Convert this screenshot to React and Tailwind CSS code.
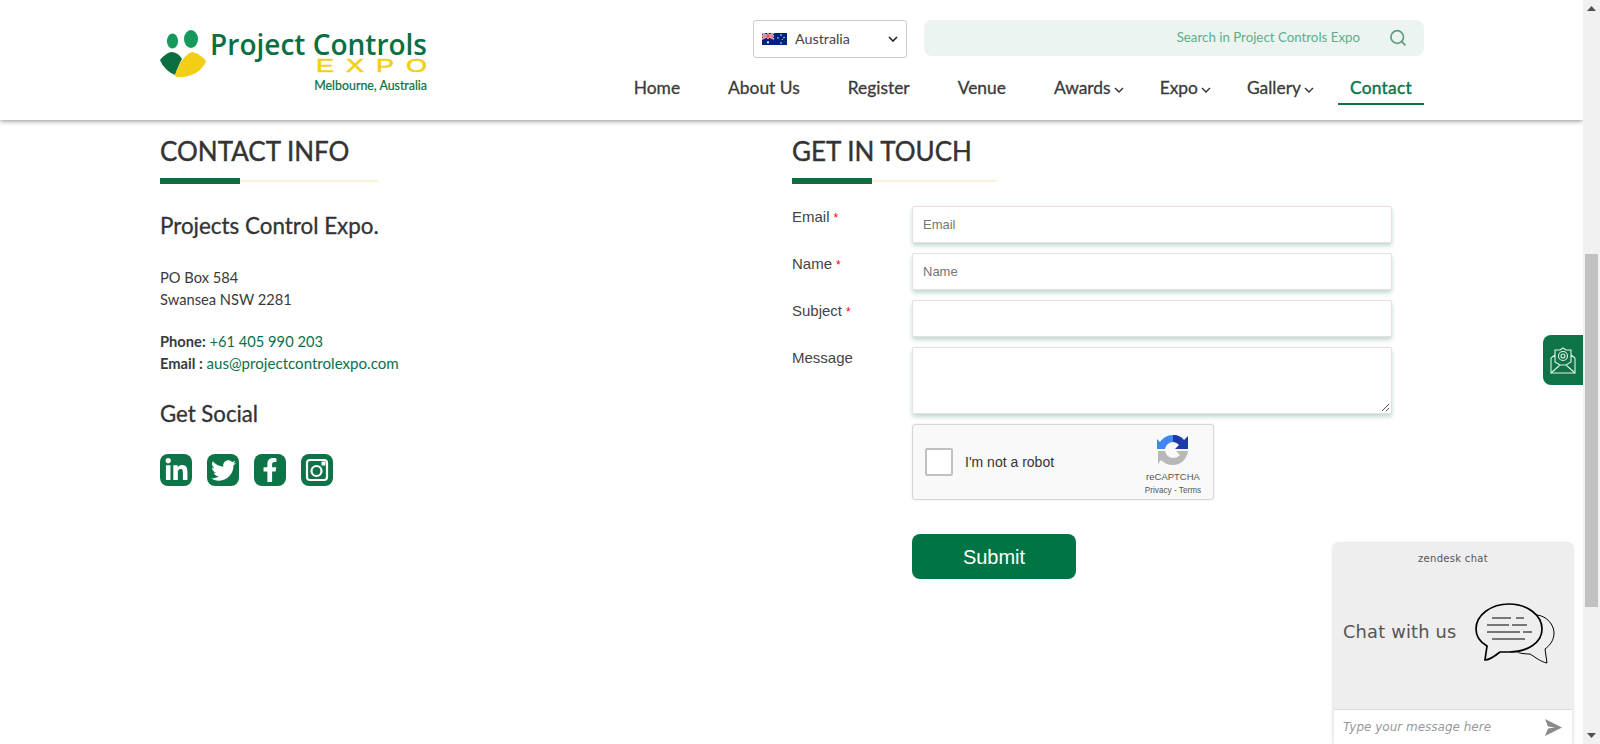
import React from 'react';
import { FaLinkedinIn, FaTwitter, FaFacebookF } from 'react-icons/fa';

const lato = { fontFamily: 'Lato, "Open Sans", sans-serif' };

function Logo() {
  return (
    <div className="flex items-start w-[270px] h-[65px] mt-[29px]">
      <svg width="47" height="48" viewBox="0 0 47 48" className="shrink-0 mt-px">
        <ellipse cx="12.5" cy="11" rx="5.6" ry="7.6" fill="#159a5b" />
        <ellipse cx="31" cy="9" rx="7" ry="9" fill="#159a5b" />
        <path d="M11 22 C16 22 20 25 22 29 C19 34 17 40 15 45 C8 42 3 37 0 30 C3 26 7 23 11 22Z" fill="#0c6f3f" />
        <path d="M32 22 C38 23 43 27 46 31 C43 40 33 47 20 47 C18 47 16 47 15 46 C17 38 23 25 32 22Z" fill="#f2cf16" />
      </svg>
      <div className="flex flex-col items-end w-[216px] ml-[4px]">
        <div className="text-[28px] leading-[30px] text-[#0c6f41] whitespace-nowrap" style={{ fontFamily: '"Open Sans", sans-serif', fontWeight: 600 }}>Project Controls</div>
        <div className="text-[18px] leading-[15px] font-normal text-[#f2cf16] tracking-[8px] -mr-[12px] whitespace-nowrap scale-x-[1.5] origin-right [-webkit-text-stroke:0.5px]" style={{ fontFamily: '"Liberation Sans", sans-serif' }}>EXPO</div>
        <div className="text-[12.4px] leading-[16px] text-[#0c6f41] whitespace-nowrap mt-[4px] [-webkit-text-stroke:0.2px]" style={lato}>Melbourne, Australia</div>
      </div>
    </div>
  );
}

function Chevron() {
  return (
    <svg width="10" height="6" viewBox="0 0 10 6" fill="none" stroke="#333" strokeWidth="1.4" className="ml-[3px] mt-[3px]">
      <path d="M1 1l4 4 4-4" />
    </svg>
  );
}

function Flag() {
  return (
    <svg width="25" height="12" viewBox="0 0 25 12" className="shrink-0">
      <rect width="25" height="12" fill="#00247d" />
      <path d="M0 0l12 6M12 0L0 6" stroke="#fff" strokeWidth="1.6" />
      <path d="M0 0l12 6M12 0L0 6" stroke="#cf142b" strokeWidth="0.6" />
      <path d="M6 0v6M0 3h12" stroke="#fff" strokeWidth="2" />
      <path d="M6 0v6M0 3h12" stroke="#cf142b" strokeWidth="1.1" />
      <circle cx="6" cy="9.3" r="1.1" fill="#fff" />
      <circle cx="19" cy="2" r="0.8" fill="#fff" />
      <circle cx="19" cy="10" r="0.8" fill="#fff" />
      <circle cx="16" cy="5" r="0.7" fill="#fff" />
      <circle cx="22" cy="4.5" r="0.7" fill="#fff" />
      <circle cx="20.3" cy="6.4" r="0.5" fill="#fff" />
    </svg>
  );
}

function NavItem({ label, chevron, active }) {
  return (
    <div className={`flex items-center h-[35px] pl-3 pt-[3px] text-[17.4px] whitespace-nowrap ${chevron ? 'pr-0' : 'pr-3'} ${active ? 'text-[#0c7346] border-b-2 border-[#0c7346] tracking-[0.25px] [-webkit-text-stroke:0.4px]' : 'text-[#3b3b3b] border-b-2 border-transparent [-webkit-text-stroke:0.3px]'}`}>
      {label}
      {chevron && <Chevron />}
    </div>
  );
}

function Header() {
  return (
    <header className="h-[120px] shrink-0 bg-white shadow-[0_1px_5px_rgba(0,0,0,0.45)] relative z-10 px-[160px] pr-[159px] flex justify-between" style={lato}>
      <Logo />
      <div className="flex flex-col items-end pt-[20px]">
        <div className="flex gap-[17px] w-[671px]">
          <div className="flex items-center w-[154px] h-[38px] border border-[#ccc] rounded-[3px] pl-[8px] pr-[8px] -mb-[2px]">
            <Flag />
            <span className="text-[14.3px] text-[#444] ml-[8px] flex-1">Australia</span>
            <svg width="10" height="6" viewBox="0 0 10 6" fill="none" stroke="#222" strokeWidth="1.6"><path d="M1 1l4 4 4-4" /></svg>
          </div>
          <div className="flex items-center justify-end h-[36px] w-[500px] bg-[#ebf4f0] rounded-[8px] pr-[17px]">
            <span className="text-[13.3px] text-[#5caf88] mr-[29px]">Search in Project Controls Expo</span>
            <svg width="18" height="18" viewBox="0 0 18 18" fill="none" stroke="#5f9f84" strokeWidth="1.7"><circle cx="8.2" cy="8" r="6.3" /><path d="M12.8 12.6l3.6 3.8" /></svg>
          </div>
        </div>
        <nav className="flex gap-6 mt-[14px]">
          <NavItem label="Home" />
          <NavItem label="About Us" />
          <NavItem label="Register" />
          <NavItem label="Venue" />
          <NavItem label="Awards" chevron />
          <NavItem label="Expo" chevron />
          <NavItem label="Gallery" chevron />
          <NavItem label="Contact" active />
        </nav>
      </div>
    </header>
  );
}

function Title({ children, w }) {
  return (
    <div>
      <h2 className="text-[26px] leading-[34px] text-[#333] whitespace-nowrap [-webkit-text-stroke:0.4px]">{children}</h2>
      <div className="flex items-center mt-[10px] h-[6px]" style={{ width: w }}>
        <div className="w-[80px] h-[6px] bg-[#0a6e41]" />
        <div className="flex-1 h-[2px] bg-[#fdf3d3]" />
      </div>
    </div>
  );
}

function Social({ children, cls = 'text-[23px]' }) {
  return <div className={`w-[32px] h-[32px] rounded-[8px] bg-[#0e7346] flex items-center justify-center text-white ${cls}`}>{children}</div>;
}

function ContactInfo() {
  return (
    <div className="w-[632px] shrink-0" style={lato}>
      <Title w={218}>CONTACT INFO</Title>
      <h3 className="text-[22.4px] leading-[28px] text-[#333] mt-[28px] [-webkit-text-stroke:0.3px]">Projects Control Expo.</h3>
      <p className="text-[14.7px] leading-[22px] text-[#3a3a3a] mt-[26px]">PO Box 584<br />Swansea NSW 2281</p>
      <p className="text-[14.7px] leading-[22px] text-[#3a3a3a] mt-[20px]"><b>Phone:</b> <span className="text-[#0c6f4a]">+61 405 990 203</span><br /><b>Email :</b> <span className="text-[#0c6f4a] text-[15.1px]">aus@projectcontrolexpo.com</span></p>
      <h3 className="text-[22.2px] leading-[28px] text-[#333] mt-[26px] [-webkit-text-stroke:0.3px]">Get Social</h3>
      <div className="flex gap-[15px] mt-[26px]">
        <Social cls="text-[25px]"><FaLinkedinIn /></Social>
        <Social cls="text-[25px]"><FaTwitter /></Social>
        <Social cls="text-[24px]"><FaFacebookF /></Social>
        <Social>
          <svg width="24" height="24" viewBox="0 0 24 24" fill="none" stroke="#fff" strokeWidth="2.2">
            <rect x="2" y="2" width="20" height="20" rx="3" />
            <circle cx="11.5" cy="13" r="5" />
            <rect x="16.5" y="3.5" width="4" height="4" fill="#fff" stroke="none" />
          </svg>
        </Social>
      </div>
    </div>
  );
}

const inputCls = 'w-[480px] bg-white border border-[#eadfe0] rounded-[2px] shadow-[0_3px_4px_rgba(12,115,70,0.25)] px-[10px] text-[13px] text-[#757575] flex items-center';

function Row({ label, req, placeholder, h = 'h-[37px]', mb = 'mb-[10px]' }) {
  return (
    <div className={`flex ${mb}`}>
      <label className="w-[120px] text-[15px] leading-[20px] text-[#444] pt-[1px]">{label}{req && <span className="text-[#f00] text-[12px] ml-[4px]">*</span>}</label>
      <div className={`${inputCls} ${h} relative`}>
        {placeholder}
        {h !== 'h-[37px]' && (
          <svg width="9" height="9" viewBox="0 0 9 9" className="absolute right-px bottom-px" stroke="#555" strokeWidth="1"><path d="M1 8l7-7M5 8l3-3" /></svg>
        )}
      </div>
    </div>
  );
}

function Recaptcha() {
  return (
    <div className="w-[302px] h-[76px] bg-[#f9f9f9] border border-[#d6d6d6] rounded-[3px] shadow-[0_0_3px_rgba(0,0,0,0.08)] flex items-center pl-[12px] pr-[11px] ml-[120px]">
      <div className="w-[28px] h-[28px] bg-white border-2 border-[#c1c1c1] rounded-[2px]" />
      <span className="text-[14px] text-[#333] ml-[12px] flex-1">I'm not a robot</span>
      <div className="flex flex-col items-center w-[58px] pt-[6px]">
        <svg width="32" height="32" viewBox="0 0 32 32">
          <path d="M16 1 C21 1 25 3 27 6 L31 2 L31 15 L18 15 L22 11 C20 9 18 8 16 8Z" fill="#1c3aa9" />
          <path d="M16 1 C10 1 6 4 3 8 L0 5 L0 15 L8 15 C9 11 12 8 16 8Z" fill="#4285f4" />
          <path d="M1 17 L8 17 C9 21 12 24 16 24 C19 24 21 23 23 21 L19 17 L31 17 C30 25 24 31 16 31 C11 31 7 29 4 26 L1 30Z" fill="#b8b8b8" />
        </svg>
        <div className="text-[9.5px] leading-[11px] text-[#555] mt-[5px]">reCAPTCHA</div>
        <div className="text-[8.2px] leading-[10px] text-[#555] mt-[4px] whitespace-nowrap">Privacy - Terms</div>
      </div>
    </div>
  );
}

function Form() {
  return (
    <div className="flex-1" style={{ fontFamily: '"Liberation Sans", sans-serif' }}>
      <div style={lato}><Title w={205}>GET IN TOUCH</Title></div>
      <div className="mt-[22px]">
        <Row label="Email" req placeholder="Email" />
        <Row label="Name" req placeholder="Name" />
        <Row label="Subject" req />
        <Row label="Message" h="h-[67px]" />
        <Recaptcha />
        <button className="block ml-[120px] mt-[34px] w-[164px] h-[45px] rounded-[8px] bg-[#017446] text-white text-[20px]">Submit</button>
      </div>
    </div>
  );
}

function Scrollbar() {
  return (
    <div className="w-[17px] shrink-0 bg-[#f1f1f1] flex flex-col items-center relative z-20">
      <svg width="9" height="5" viewBox="0 0 9 5" className="mt-[6px]"><path d="M4.5 0L9 5H0Z" fill="#505050" /></svg>
      <div className="w-[13px] h-[353px] bg-[#c1c1c1] mt-[243px]" />
      <div className="flex-1" />
      <svg width="9" height="5" viewBox="0 0 9 5" className="mb-[6px]"><path d="M4.5 5L9 0H0Z" fill="#505050" /></svg>
    </div>
  );
}

function EmailTab() {
  return (
    <div className="absolute left-[1543px] top-[335px] w-[40px] h-[50px] bg-[#0e7346] rounded-l-[8px] flex items-center justify-center">
      <svg width="26" height="28" viewBox="0 0 26 28" fill="none" stroke="#e4efe9" strokeWidth="1.1">
        <path d="M1 12v15h24V12" />
        <path d="M1 12l4-3M25 12l-4-3M1 27l9-8M25 27l-9-8M5 16V4h5l3-2 3 2h5v12l-5 3h-6z" />
        <circle cx="13" cy="10" r="4.5" />
        <circle cx="13" cy="10" r="2" />
      </svg>
    </div>
  );
}

function Chat() {
  return (
    <div className="absolute left-[1333px] top-[543px] w-[240px] h-[201px] bg-[#eeeeee] rounded-t-[6px] shadow-[0_0_3px_rgba(0,0,0,0.2)] flex flex-col" style={{ fontFamily: '"DejaVu Sans", sans-serif' }}>
      <div className="text-center text-[10px] text-[#555] pt-[9px] leading-[14px] tracking-[0.3px]">zendesk chat</div>
      <div className="flex-1 flex items-center pl-[10px] pb-[10px]">
        <span className="text-[17.8px] text-[#555] tracking-[0.2px] whitespace-nowrap">Chat with us</span>
        <svg width="82" height="64" viewBox="0 0 82 64" fill="none" stroke="#000" className="ml-[18px] mt-[1px]">
          <path d="M62 14 C72 15 79 24 79 32 C79 40 74 45 70 48 L72 62 C66 61 60 56 55 53 C48 53 43 52 36 49" strokeWidth="1" />
          <ellipse cx="34" cy="28" rx="32.5" ry="24.5" fill="#eeeeee" stroke="none" />
          <path d="M34 3 C52 3 67 14 67 28 C67 42 52 51 34 51 L25 51 C20 55 15 59 10 59 L12 45 C5 41 1 35 1 28 C1 14 16 3 34 3Z" strokeWidth="1.7" fill="none" />
          <path d="M17 17h19M41 17h8M12 24h22M37 24h15M12 31h33M48 31h9M17 38h33" strokeWidth="1" />
        </svg>
      </div>
      <div className="h-[35px] mx-[1px] bg-white border-t border-[#dcdcdc] flex items-center pl-[9px] pr-[10px]">
        <span className="flex-1 text-[12px] italic text-[#999]">Type your message here</span>
        <svg width="17" height="17" viewBox="0 0 17 17"><path d="M0 0L17 8.5L0 17L3 9.5L10 8.5L3 7.5Z" fill="#8a8a8a" /></svg>
      </div>
    </div>
  );
}

export default function App() {
  return (
    <div className="h-[744px] w-full flex overflow-hidden relative bg-white">
      <div className="flex-1 flex flex-col min-w-0">
        <Header />
        <main className="flex pl-[160px] pr-[208px] pt-[14px]">
          <ContactInfo />
          <Form />
        </main>
      </div>
      <Scrollbar />
      <EmailTab />
      <Chat />
    </div>
  );
}
